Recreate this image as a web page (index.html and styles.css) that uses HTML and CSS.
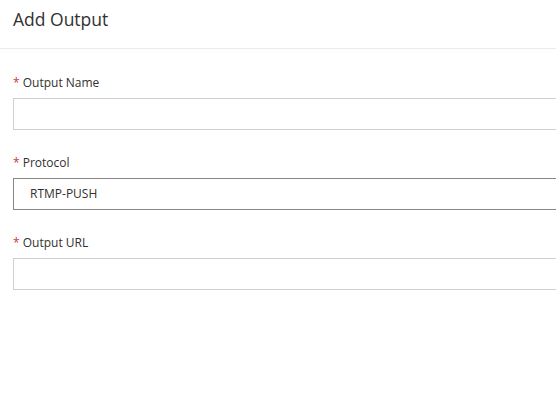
FILE: index.html
```html
<!DOCTYPE html>
<html>
<head>
<meta charset="utf-8">
<link rel="stylesheet" href="styles.css">
</head>
<body>
<div class="panel">
  <div class="header">
    <h1 class="title">Add Output</h1>
  </div>
  <form class="form">
    <div class="field">
      <label class="label"><span class="req">*</span> Output Name</label>
      <div class="input"></div>
    </div>
    <div class="field">
      <label class="label"><span class="req">*</span> Protocol</label>
      <div class="input select">RTMP-PUSH</div>
    </div>
    <div class="field">
      <label class="label"><span class="req">*</span> Output URL</label>
      <div class="input"></div>
    </div>
  </form>
</div>
</body>
</html>
```
FILE: styles.css
```css
html, body {
  margin: 0;
  padding: 0;
  background: #ffffff;
  overflow: hidden;
}
body {
  font-family: "Segoe UI", "Open Sans", "Noto Sans", sans-serif;
  color: #323130;
  width: 556px;
  height: 409px;
}
.panel {
  width: 556px;
}
.header {
  height: 48px;
  border-bottom: 1px solid #edebe9;
  padding-left: 13px;
}
.title {
  margin: 0;
  font-size: 17.5px;
  font-weight: 400;
  line-height: 38px;
}
.form {
  padding: 24px 0 0 13px;
  display: flex;
  flex-direction: column;
  gap: 23px;
}
.field {
  display: flex;
  flex-direction: column;
  gap: 5px;
}
.label {
  font-size: 12px;
  line-height: 20px;
  height: 20px;
}
.req {
  color: #d13438;
}
.input {
  height: 32px;
  box-sizing: border-box;
  border: 1px solid #d2d0ce;
  border-right: 0;
  background: #fff;
  font-size: 12px;
  line-height: 30px;
  padding-left: 16px;
}
.select {
  border-color: #8a8886;
}
```
